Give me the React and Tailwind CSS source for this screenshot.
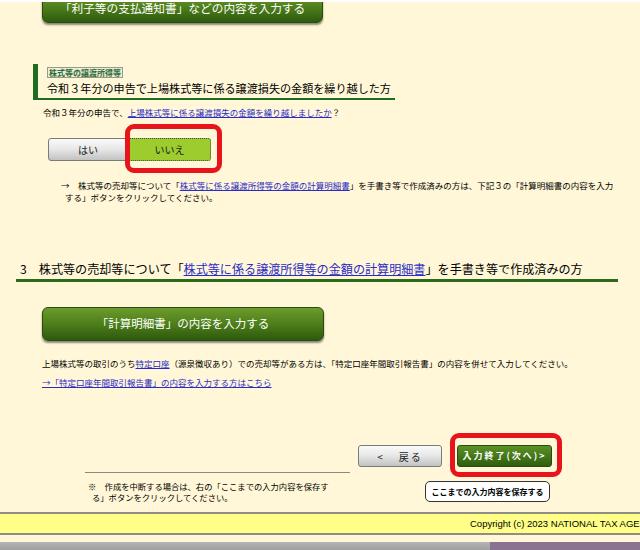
import React from "react";

const greenBtn =
  "flex items-center justify-center rounded-[6px] border border-[#2b4a12] bg-gradient-to-b from-[#6c9c2c] via-[#4d7e1a] to-[#2d5a0d] text-white shadow-[0_2px_2px_rgba(0,0,0,0.45)]";

const grayBtn =
  "flex items-center justify-center border border-[#7a7a7a] bg-gradient-to-b from-[#fbfbfb] via-[#e6e6e6] to-[#c2c2c2] text-[#222]";

const link = "text-[#2b2bc9] underline";

const App = () => {
  return (
    <div className="relative h-[550px] w-[640px] overflow-hidden bg-[#fff7d7] font-['Noto_Sans_CJK_JP','Liberation_Sans',sans-serif] text-black">
      <div className="relative z-10 h-[2px] bg-white" />

      {/* top button, cut off by the window */}
      <div className="pl-[42px]">
        <div className={`-mt-[10px] h-[31px] w-[281px] text-[11.7px] ${greenBtn}`}>
          「利子等の支払通知書」などの内容を入力する
        </div>
      </div>

      {/* section title */}
      <div className="ml-[33px] mt-[41px] w-[362px] border-b-2 border-l-[5px] border-[#1f6b1f] pl-[9px] pt-[3px] leading-none">
        <div className="h-[11px] w-fit border border-[#9a9a8a] bg-[#ececdf] px-[1px] text-[8px] font-bold leading-[9px] text-[#2e6b2e]">
          株式等の譲渡所得等
        </div>
        <div className="text-[11.1px] leading-[20px]">
          令和３年分の申告で上場株式等に係る譲渡損失の金額を繰り越した方
        </div>
      </div>

      <div className="mt-[6px] pl-[43px] text-[8.5px] leading-[12px]">
        令和３年分の申告で、
        <span className={link}>上場株式等に係る譲渡損失の金額を繰り越しましたか</span>？
      </div>

      {/* yes / no */}
      <div className="relative ml-[48px] mt-[20px] flex w-fit">
        <div className={`h-[23px] w-[80px] rounded-l-[3px] text-[10px] ${grayBtn}`}>はい</div>
        <div className="flex h-[23px] w-[83px] items-center justify-center rounded-r-[3px] border border-dotted border-[#444] bg-[#9ccc2e] text-[10px] text-[#1a1a1a]">
          いいえ
        </div>
        <div className="absolute left-[77px] top-[-14px] h-[49px] w-[97px] rounded-[9px] border-[5px] border-[#e8141c]" />
      </div>

      <div className="mt-[18px] pl-[65px] -indent-[4px] text-[8.5px] leading-[12px]">
        →　株式等の売却等について「
        <span className={link}>株式等に係る譲渡所得等の金額の計算明細書</span>
        」を手書き等で作成済みの方は、下記３の「計算明細書の内容を入力
        <br />
        する」ボタンをクリックしてください。
      </div>

      {/* section 3 */}
      <div className="ml-[16px] mt-[56px] w-[602px] border-b-[3px] border-[#2a6a1a] pl-[4px] text-[12.1px] leading-[20px]">
        3　株式等の売却等について「
        <span className={link}>株式等に係る譲渡所得等の金額の計算明細書</span>
        」を手書き等で作成済みの方
      </div>

      <div className="pl-[42px]">
        <div className={`mt-[25px] h-[34px] w-[282px] text-[11.5px] ${greenBtn}`}>
          「計算明細書」の内容を入力する
        </div>
      </div>

      <div className="mt-[16px] pl-[42px] text-[8.5px] leading-[12px]">
        上場株式等の取引のうち<span className={link}>特定口座</span>
        （源泉徴収あり）での売却等がある方は、「特定口座年間取引報告書」の内容を併せて入力してください。
      </div>
      <div className="mt-[7px] pl-[42px] text-[8.5px] leading-[12px]">
        <span className={link}>→「特定口座年間取引報告書」の内容を入力する方はこちら</span>
      </div>

      {/* navigation */}
      <div className="ml-[358px] mt-[57px] flex gap-[15px]">
        <div className={`h-[22px] w-[84px] gap-[14px] rounded-[3px] text-[10px] tracking-[2px] ${grayBtn}`}>
          <span>&lt;</span>
          <span>戻る</span>
        </div>
        <div className="relative">
          <div className="flex h-[22px] w-[95px] items-center justify-center rounded-[3px] border border-[#2b4a12] bg-gradient-to-b from-[#5c9226] to-[#2f5e0f] text-[9px] font-bold tracking-[2px] text-white">
            入力終了(次へ)&gt;
          </div>
          <div className="absolute left-[-7px] top-[-12px] h-[44px] w-[112px] rounded-[9px] border-[5px] border-[#e8141c]" />
        </div>
      </div>

      <div className="mt-[5px] flex items-start">
        <div className="ml-[85px] w-[265px] border-t border-[#8a8a80] pl-[7px] pt-[8px] -indent-[4px] text-[8.3px] leading-[11px]">
          ※　作成を中断する場合は、右の「ここまでの入力内容を保存す
          <br />
          る」ボタンをクリックしてください。
        </div>
        <div className="ml-[75px] mt-[9px] flex h-[21px] w-[125px] items-center justify-center rounded-[5px] border border-[#333] bg-white text-[8px] font-bold">
          ここまでの入力内容を保存する
        </div>
      </div>

      {/* footer */}
      <div className="mt-[9px] h-[23px] overflow-hidden border-y-2 border-[#8e8e86] bg-[#ffff88] pl-[470px] font-['Liberation_Sans',sans-serif] text-[9.5px] leading-[19px] whitespace-nowrap">
        Copyright (c) 2023 NATIONAL TAX AGENCY ALL RIGHTS RESERVED.
      </div>
      <div className="h-[7px]" />
      <div className="flex h-[10px]">
        <div className="w-[490px] bg-gradient-to-b from-[#b4b4b4] to-[#9a9a9a]" />
        <div className="flex-1 bg-[#8a7390]" />
      </div>
    </div>
  );
};

export default App;
